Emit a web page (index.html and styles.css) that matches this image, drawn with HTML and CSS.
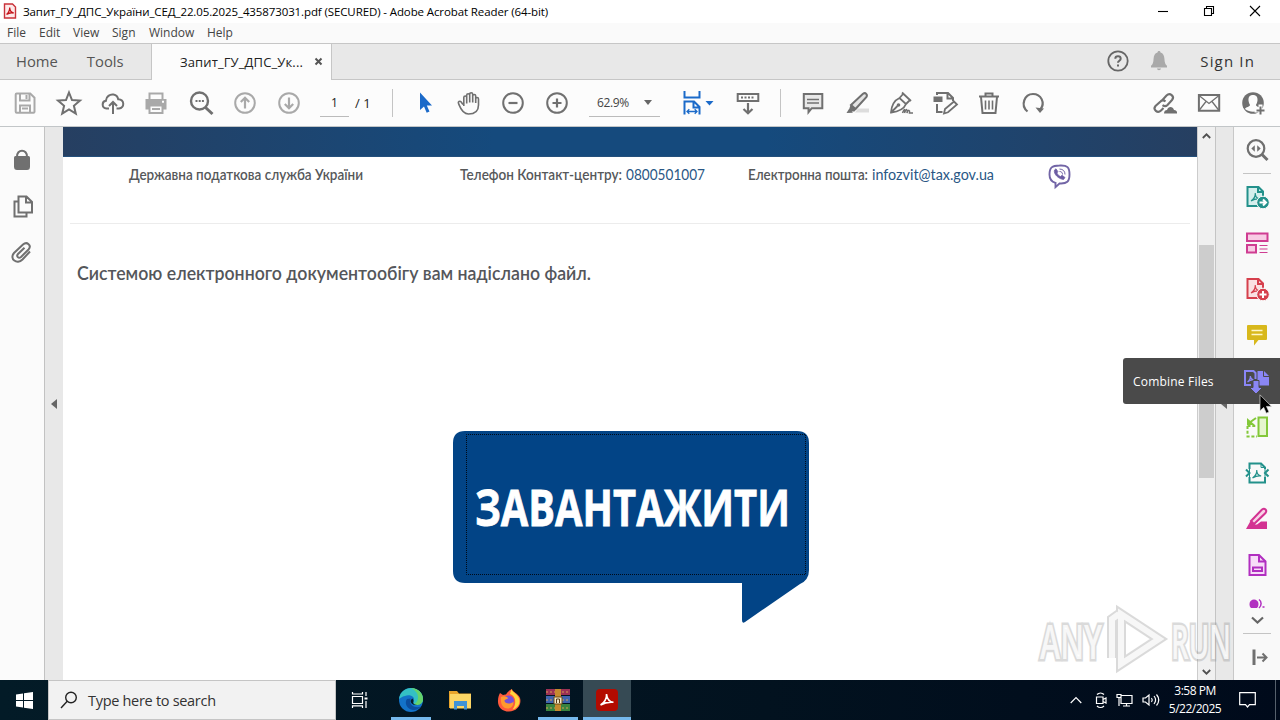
FILE: index.html
```
<!DOCTYPE html>
<html lang="uk">
<head>
    <meta charset="UTF-8">
    <meta name="viewport" content="width=device-width, initial-scale=1.0">
    <title>Запит_ГУ_ДПС_України_СЕД_22.05.2025_435873031.pdf</title>
    <link rel="stylesheet" href="styles.css">
</head>
<body>
    <div class="screen">
        <header class="titlebar">
            <svg class="app-icon" width="14" height="16" viewBox="0 0 14 16"><path d="M1.500 1h8L12.500 4v11h-11z" fill="#fdeaea" stroke="#c9323a" stroke-width="1.400"/><path d="M3.500 11.500c2-1.500 3.500-5 3.200-7 0 3 2 5 4 5.500-2-.5-5 0-7.200 1.500z" fill="none" stroke="#c4161c" stroke-width="1.300"/></svg>
            <span class="title-text">Запит_ГУ_ДПС_України_СЕД_22.05.2025_435873031.pdf (SECURED) - Adobe Acrobat Reader (64-bit)</span>
            <div class="window-buttons">
                <svg width="12" height="12" viewBox="0 0 12 12"><path d="M1 6.500h10"/></svg>
                <svg width="12" height="12" viewBox="0 0 12 12"><path d="M1.500 3.500h7v7h-7zM3.500 3V1.500h7v7H9"/></svg>
                <svg width="12" height="12" viewBox="0 0 12 12"><path d="M1 1l10 10M11 1L1 11"/></svg>
            </div>
        </header>

        <nav class="menubar">
            <span>File</span>
            <span>Edit</span>
            <span>View</span>
            <span>Sign</span>
            <span>Window</span>
            <span>Help</span>
        </nav>

        <div class="tabs">
            <div class="tab-static">
                <span>Home</span>
                <span>Tools</span>
            </div>
            <div class="tab-active">
                <span>Запит_ГУ_ДПС_Ук...</span>
                <svg width="9" height="9" viewBox="0 0 9 9"><path d="M1.500 1.500l6 6M7.500 1.500l-6 6" stroke="#555" stroke-width="2"/></svg>
            </div>
            <div class="tabs-right">
                <svg width="22" height="22" viewBox="0 0 22 22" fill="none" stroke="#666" stroke-width="1.800"><circle cx="11" cy="11" r="9.700"/><path d="M8.300 8.700c0-3.300 5.400-3.300 5.400 0 0 2-2.700 2-2.700 4" stroke-width="2"/><path d="M11 14.500v2" stroke-width="2"/></svg>
                <svg class="bell" width="18" height="20" viewBox="0 0 18 20" fill="#a9a9a9"><path d="M9 0c1 0 1.500.700 1.500 1.600 2.700.8 3.700 3 3.900 6 .2 4 .9 6 2.600 7.200V16.500H1v-1.700c1.700-1.200 2.400-3.200 2.600-7.200.2-3 1.200-5.200 3.900-6C7.500.7 8 0 9 0zM7 17.500h4c-.3 2.200-3.700 2.200-4 0z"/></svg>
                <span>Sign In</span>
            </div>
        </div>

        <div class="toolbar">
            <div class="tool-group">
                <svg class="tool pale" viewBox="0 0 30 30"><path d="M5.700 6.500q0-1 1-1h13.500l4.300 4.200v14q0 1-1 1H6.700q-1 0-1-1z"/><path d="M10 5.500v7h9.500v-7M16.500 7v4M10 24.500v-7h10v7M12 20.500h6"/></svg>
                <svg class="tool" viewBox="0 0 30 30"><path d="M15 4.500l3 7.500 8 .6-6.100 5.200 1.900 7.900-6.800-4.300-6.800 4.300 1.900-7.900L4 12.600l8-.6z"/></svg>
                <svg class="tool" viewBox="0 0 30 30"><path d="M11 20.500H8.500c-5-.5-5-7-.6-7.700C8 8.500 12 6 15.500 6.600c2.700.5 4.300 2.400 4.700 4.700 6.600.2 6.600 8.700.8 9.200h-2.500M15 26V14.500M11 18l4-4 4 4" stroke-width="2"/></svg>
                <svg class="tool pale" viewBox="0 0 30 30"><path d="M7.500 11V5.500h13V11"/><path d="M3.500 11h21v10.500h-21z" fill="#a9a9a9" stroke="none"/><path d="M7.500 17.500h13v7.500h-13z" fill="#fcfcfc"/><path d="M10 21h8"/><path d="M20 13.700h2" stroke="#fff"/></svg>
                <svg class="tool" viewBox="0 0 30 30"><circle cx="13.500" cy="13" r="8.500" stroke-width="2.400"/><path d="M19.500 19.500l7 6.500" stroke-width="3"/><path d="M9.500 13h2m1.200 0h2m1.200 0h2" stroke-width="2.200"/></svg>
                <svg class="tool pale" viewBox="0 0 30 30"><circle cx="15" cy="15" r="9.800"/><path d="M15 20.500V10M10.800 14l4.200-4.200 4.200 4.200" stroke-width="2.200"/></svg>
                <svg class="tool pale" viewBox="0 0 30 30"><circle cx="15" cy="15" r="9.800"/><path d="M15 9.500V20M10.800 16l4.200 4.200 4.200-4.200" stroke-width="2.200"/></svg>
            </div>
            <div class="page-box">1</div>
            <span class="page-total">/ 1</span>
            <div class="tool-sep"></div>
            <div class="tool-group">
                <svg class="tool" viewBox="0 0 30 30"><path d="M10 4.500v17.500l4-3.500 2.700 6.300 2.800-1.200-2.700-6h5.200z" fill="#1b6ac9" stroke="none"/></svg>
                <svg class="tool" viewBox="0 0 30 30"><path d="M9 16.500l-2-2.700c-1.200-1.200-3.300 0-2.500 1.600C6 19 8 26 14.500 26c6 0 10-2 10-9v-6c0-2-2.800-2-2.800 0v4-7c0-2-3-2-3 0v6.500V6.200c0-2-3-2-3 0v8.300V7.200c0-2-3-2-3 0v8.300V9.500c0-2-2.900-2-2.900 0V18" stroke-width="1.600"/></svg>
                <svg class="tool" viewBox="0 0 30 30"><circle cx="15" cy="15" r="9.800"/><path d="M10.500 15h9" stroke-width="2.200"/></svg>
                <svg class="tool" viewBox="0 0 30 30"><circle cx="15" cy="15" r="9.800"/><path d="M10.500 15h9M15 10.500v9" stroke-width="2.200"/></svg>
            </div>
            <div class="zoom-box"><span>62.9%</span><i class="caret"></i></div>
            <svg class="fit" viewBox="0 0 36 30" width="36" height="30"><path d="M3.500 3v6.500h15V3M3.500 26.500v-13H13l5.500 5.500v7.500M12.500 14v5.500h6" fill="none" stroke="#1b6ac9" stroke-width="2"/><path d="M6 23.500h10M8.300 21.300L6 23.500l2.300 2.200M13.700 21.300l2.300 2.200-2.300 2.200" fill="none" stroke="#1b6ac9" stroke-width="1.300"/><path d="M24.500 13h8l-4 4.500z" fill="#1b6ac9"/></svg>
            <svg class="tool tool-scroll" viewBox="0 0 30 30"><path d="M4.700 5.900h20.600v7H4.700z" stroke-width="2"/><path d="M8 9.400h14" stroke-dasharray="2 1.500"/><path d="M15 15v10M10.500 21l4.500 4.300 4.500-4.300" stroke-width="2.200"/></svg>
            <div class="tool-sep"></div>
            <div class="tool-group">
                <svg class="tool" viewBox="0 0 30 30"><path d="M5.800 6h18.500v14.200h-10.500l-3.300 4v-4H5.800z" fill="#e8e8e8"/><path d="M9 11.500h12M9 15h12" stroke-width="1.500"/></svg>
                <svg class="tool" viewBox="0 0 30 30"><path d="M13 24.500h14v-4H16z" fill="#ddd" stroke="none"/><path d="M9 17L21 5.800c2.500-1.800 5 .8 3.300 3.300L13.500 21z" fill="#e3e3e3"/><path d="M8.500 17l5.500 4-1.500 2.500-6-.2zM4.500 25l2.500-4 4 3.700z" fill="#707070" stroke="none"/></svg>
                <svg class="tool" viewBox="0 0 30 30"><path d="M5 24.500C5.500 17.500 8 12.500 13.500 10l6.500 6c-2 5-6.500 7.500-15 8.500zM13.500 10l4-4.500M20 16l4-4M16 4.500l9 8.500M5.500 24l6-6" stroke-width="1.800"/><circle cx="12.500" cy="17" r="1.800" fill="#707070" stroke="none"/><path d="M16.500 25c2-5 3-4 2 0 2-5 3-4 2.500 0 1.500-4 3-3 2.500 0h3.500" stroke-width="1.500"/></svg>
                <svg class="tool" viewBox="0 0 30 30"><path d="M3.500 8.500h9v5.500h-9z" fill="#707070" stroke="none"/><path d="M7 7V5h11l5 5v3M17.500 5v5.500H23M7 16v8h5.500" stroke-width="2"/><path d="M14 25.500l1-4.500 9-7.500 3 3-9 7.800z" stroke-width="1.800"/></svg>
                <svg class="tool" viewBox="0 0 30 30"><path d="M5 8.500h20M11.500 8V5.500h7V8M7 9l1.500 16h13L23 9" stroke-width="2"/><path d="M11.500 12.500v9M15 12.500v9M18.500 12.500v9" stroke-width="1.600"/></svg>
                <svg class="tool" viewBox="0 0 30 30"><path d="M9.500 23.500C2 17 6.500 6 15 6c8 0 12.500 8.500 7.500 15.500" stroke-width="2.200"/><path d="M17.500 19.500l8.500 1-4 4.500z" fill="#707070" stroke="none"/></svg>
            </div>
            <div class="tool-group group-share">
                <svg class="tool" viewBox="0 0 30 30"><path d="M12 12.500l4.500-5c3.500-3.500 8.500 1 5.500 4.500l-4.500 5c-1.500 1.500-3.500 1.300-5 .2M15.500 13.500c-1.600-1.500-3.700-1.500-5 0L5.500 18c-3 3.500 2 8 5.500 4.500l2.500-2.500" stroke-width="2.100"/><path d="M14 25.500c0-2.500 1.500-3.500 3-3.500 1-4 6-4 7 0 2 0 3.500 1.500 3 3.500z" fill="#707070" stroke="none"/></svg>
                <svg class="tool" viewBox="0 0 30 30"><path d="M4.900 7h20.300v15.800H4.900z"/><path d="M5 7.500l10 8 10-8M5 22.500l7-9M25 22.500l-7-9" stroke-width="1.300"/></svg>
                <svg class="tool" viewBox="0 0 30 30"><circle cx="15" cy="15" r="10.800" fill="#707070" stroke="none"/><path d="M15 7c-3.400 0-4.800 2.200-4.500 5.500.3 2.500 1 3.500 1.500 4.300.3 2.200-4.500 2.200-5 4.200 5 3.500 11 3.500 16 0-.5-2-5.300-2-5-4.200.5-1 1.200-2 1.500-4.300.3-3.300-1.100-5.500-4.500-5.500z" fill="#fcfcfc" stroke="none"/><path d="M20.500 16.500h4v4h5v4h-5v4h-4v-4h-4v-4h4z" fill="#fcfcfc" stroke="none"/><path d="M22.500 18.500v8M18.500 22.500h8" stroke-width="2"/></svg>
            </div>
        </div>

        <main class="workspace">
            <aside class="left-rail">
                <svg class="rail-icon" viewBox="0 0 30 30"><path d="M7 12.500q0-1.500 1.500-1.500h13q1.500 0 1.500 1.500v9q0 3.500-3 3.500H10q-3 0-3-3.500z" fill="#707070" stroke="none"/><path d="M10 12c-.5-8.500 10.500-8.500 10 0"/></svg>
                <svg class="rail-icon" viewBox="0 0 30 30"><path d="M11.500 5.500h8L25 11v10.500H11.500zM19 5.500v6h6M11 10.500H7.500v15h12v-3"/></svg>
                <svg class="rail-icon" viewBox="0 0 30 30"><path d="M23 14.500l-7.500 8C10 28 2 22 7 16l9-8.500c4-3.500 9 1 5.500 5L14 20c-2.500 2-5-.8-3-3l6.500-6.300"/></svg>
            </aside>
            <div class="gutter"><i class="tri-left"></i></div>

            <article class="page">
                <div class="banner"></div>
                <div class="contacts">
                    <svg width="1134" height="36" viewBox="0 0 1134 36">
                        <text class="c-label" x="66" y="23" textLength="234" lengthAdjust="spacingAndGlyphs">Державна податкова служба України</text>
                        <text class="c-label" x="397" y="23" textLength="162" lengthAdjust="spacingAndGlyphs">Телефон Контакт-центру:</text>
                        <text class="c-value" x="563" y="23" textLength="79" lengthAdjust="spacingAndGlyphs">0800501007</text>
                        <text class="c-label" x="685" y="23" textLength="120" lengthAdjust="spacingAndGlyphs">Електронна пошта:</text>
                        <text class="c-value" x="809" y="23" textLength="122" lengthAdjust="spacingAndGlyphs">infozvit@tax.gov.ua</text>
                        <g fill="none" stroke="#7265a6" stroke-width="1.900"><path d="M996.500 8.500c8-.5 10 2 10 9s-2.500 9.500-10 9l-4 3.600v-4.300c-4.500-1.200-6-3.400-6-8.300 0-7 2.500-9 10-9z"/><path d="M991.500 13c-1.200 4 4 9 9 9.500l1.500-2-3-2.200-1.500 1.200c-2-.8-3-2-3.600-3.500l1-1.300-1.900-2.900z" fill="#6b5ba3" stroke-width=".8"/><path d="M996.500 12c3.500.2 5.500 2 5.500 5.500M996.500 14.500c2 0 3 1 3 3" stroke-width="1"/></g>
                    </svg>
                </div>
                <div class="message">
                    <svg width="600" height="40" viewBox="0 0 600 40"><text class="msg-text" x="14" y="25" textLength="514" lengthAdjust="spacingAndGlyphs">Системою електронного документообігу вам надіслано файл.</text></svg>
                </div>
                <div class="download">
                    <svg width="356" height="192" viewBox="0 0 356 192">
                        <path d="M12 0h332q12 0 12 12v127q0 10-9 14L292 191q-3 2-3-2v-37H12q-12 0-12-12V12Q0 0 12 0z" fill="#024486"/>
                        <path d="M13.500 3.500h339v140h-339z" fill="none" stroke="#000a18" stroke-dasharray="1 1" stroke-dashoffset=".5"/>
                        <text class="dl-text" x="22" y="94.500" textLength="315" lengthAdjust="spacingAndGlyphs">ЗАВАНТАЖИТИ</text>
                    </svg>
                </div>
            </article>

            <div class="scrollbar">
                <svg width="9" height="6" viewBox="0 0 9 6"><path d="M.8 5L4.500 1.300 8.200 5"/></svg>
                <div class="thumb"></div>
                <svg width="9" height="6" viewBox="0 0 9 6"><path d="M.8 1L4.500 4.700 8.200 1"/></svg>
            </div>
            <div class="gutter gutter-right"><i class="tri-left"></i></div>

            <aside class="right-rail">
                <div class="rail-cell"><svg class="rail-icon" viewBox="0 0 30 30"><circle cx="14" cy="13.500" r="8.300" stroke-width="2.200"/><path d="M20 19.500l5.500 5.500" stroke-width="3"/><path d="M12.800 10.200v6.600l-3.500-3.300zM15.200 10.200v6.600l3.500-3.300z" fill="#707070" stroke="none"/></svg></div>
                <div class="rail-line"></div>
                <div class="rail-cell"><svg class="rail-icon export" viewBox="0 0 30 30"><path d="M5.500 5h11l4.500 4.500V24H5.500z" fill="#d5efed"/><path d="M16 5v5h5"/><path class="pdf" d="M9 19c3-2 4.500-5.500 4.200-8 0 3 2 5.500 4.500 6-3-.5-6 .4-8.700 2z"/><circle class="badge" cx="21" cy="20.500" r="6.300"/><path class="sign" d="M17.500 20.500h6M21 17.500l3 3-3 3"/></svg></div>
                <div class="rail-cell"><svg class="rail-icon organize" viewBox="0 0 30 30"><path d="M5 5.500h20.500v7.500H5zM5 17h9v7.500H5z" fill="#f8cbe4"/><path d="M17.500 17.500h8M17.500 21h8M17.500 24.500h8" stroke-width="1.200"/></svg></div>
                <div class="rail-cell"><svg class="rail-icon create" viewBox="0 0 30 30"><path d="M5.500 5h11l4.500 4.500V24H5.500z" fill="#fae0e1"/><path d="M16 5v5h5"/><path class="pdf" d="M9 19c3-2 4.500-5.500 4.200-8 0 3 2 5.500 4.500 6-3-.5-6 .4-8.700 2z"/><circle class="badge" cx="21" cy="20.500" r="6.300"/><path class="sign" d="M17.500 20.500h7M21 17v7"/></svg></div>
                <div class="rail-cell"><svg class="rail-icon" viewBox="0 0 30 30"><path d="M6 5h18q1 0 1 1v13q0 1-1 1h-7.500L12 25.500V20H6q-1 0-1-1V6q0-1 1-1z" fill="#d8b81c" stroke="none"/><path d="M9.500 10.500h11M9.500 14.500h11" stroke="#fff6c8" stroke-width="1.600"/></svg></div>
                <div class="rail-cell"></div>
                <div class="rail-cell"><svg class="rail-icon crop" viewBox="0 0 30 30"><path d="M16.500 5.500h8.500v18.500h-8.500z" fill="#e5f5ce"/><path d="M5.500 14v10.500H15M5.500 14H15" stroke-dasharray="3 1.800"/><path d="M14 6l-7 5"/><path d="M5 6v7h8z" fill="#83c83a" stroke="none"/></svg></div>
                <div class="rail-cell"><svg class="rail-icon export" viewBox="0 0 30 30"><path d="M7.500 11V5.500H19l4 4V11M7.500 19v5.500H23V19" /><path d="M7.500 11v8M23 11v8M19 5.500v4h4" stroke-width="1"/><path class="pdf" d="M10.500 20c3-2 4.500-5.500 4.200-8 0 3 2 5.500 4.500 6-3-.5-6 .4-8.700 2z"/><path d="M4 11.500L7.500 15 4 18.500M26.500 11.500L23 15l3.500 3.500"/></svg></div>
                <div class="rail-cell"><svg class="rail-icon redact" viewBox="0 0 30 30"><path d="M9 17L20 5.500q2-1.500 3.500 0t0 3.500L12 20z" fill="#f8d3e7"/><path d="M8.500 17l4.500 3.500h2L19 17.500h6V25H4z" fill="#d33392" stroke="none"/></svg></div>
                <div class="rail-cell"><svg class="rail-icon form" viewBox="0 0 30 30"><path d="M7.500 5H17l6.500 6.500V25h-16z" fill="#f7dcf8"/><path d="M17 5v6.500h6.500M11 17.500h9v3.500h-9z"/></svg></div>
                <div class="rail-cell cut"><svg width="20" height="14" viewBox="0 0 20 14"><path d="M2.500 9c0-6 9-6 9 0 0 2-.7 3.200-1.500 4H4c-1-.8-1.500-2-1.500-4z" fill="#b12fc0"/><path d="M12 4.500c2.800 2 2.800 6 0 8.500M15.500 12h2" fill="none" stroke="#b12fc0" stroke-width="1.500"/></svg></div>
                <div class="rail-more"><svg width="13" height="8" viewBox="0 0 13 8"><path d="M1 1.500l5.500 5 5.500-5" fill="none" stroke="#666" stroke-width="2.200"/></svg></div>
                <div class="rail-line"></div>
                <div class="rail-cell"><svg class="rail-icon" viewBox="0 0 30 30"><path d="M12 7.500v15.500" stroke-width="3"/><path d="M15 15.500h9M20.500 11.500l4 4-4 4"/></svg></div>
            </aside>

            <div class="tooltip">
                <span>Combine Files</span>
                <svg class="rail-icon combine" viewBox="0 0 30 30"><path d="M10 19H4V5h8.500l2 2v6" fill="none"/><path d="M16.500 5H23l5 5v9.500H16.500z" fill="#8a86f5" stroke="none"/><path d="M22.500 4.500v6H28" stroke="#4a4a4a" stroke-width="1"/><path d="M6.500 16c2-1.500 3-4 2.800-6 .2 2 1.500 3.500 3.200 4-2-.3-4 .4-6 2z" stroke-width="1.200"/><path d="M12 14.500h6v7h3.500L15 28l-6.500-6.500H12z" fill="#8a86f5" stroke="#4a4a4a" stroke-width="1"/></svg>
            </div>
            <svg class="cursor" width="14" height="20" viewBox="0 0 14 20"><path d="M1 .8v16l3.700-3.400 2.600 5.800 2.700-1.200-2.500-5.600h5z" fill="#000" stroke="#ddd" stroke-width=".7"/></svg>

            <svg class="watermark" width="200" height="66" viewBox="0 0 200 66">
                <g class="wm-shadow"><text x="5" y="51" textLength="62" lengthAdjust="spacingAndGlyphs">ANY</text><text x="136" y="51" textLength="60" lengthAdjust="spacingAndGlyphs">RUN</text><path d="M77 50V11l7-5M86 6v50l38-25z"/></g>
                <g class="wm-face"><text x="5" y="51" textLength="62" lengthAdjust="spacingAndGlyphs">ANY</text><text x="136" y="51" textLength="60" lengthAdjust="spacingAndGlyphs">RUN</text><path d="M77 50V11l7-5M86 6v50l38-25z"/></g>
            </svg>
        </main>

        <footer class="taskbar">
            <div class="start"><svg width="17" height="17" viewBox="0 0 17 17" fill="#fff"><path d="M0 2.400l7-1v6.600H0zM8 1.200L17 0v8H8zM0 9h7v6.600l-7-1zM8 9h9v8l-9-1.200z"/></svg></div>
            <div class="search">
                <svg width="18" height="18" viewBox="0 0 18 18" fill="none" stroke="#222" stroke-width="1.400"><circle cx="11" cy="6.500" r="5.300"/><path d="M7.200 10.300L1 17"/></svg>
                <span>Type here to search</span>
            </div>
            <div class="task"><svg width="18" height="18" viewBox="0 0 18 18" fill="none" stroke="#fff" stroke-width="1.200"><path d="M1.500 5.500h10v7h-10zM1.500 1v2h10V1M1.500 17v-2.200h10V17M15 1v4M15 10v7"/><path d="M13.500 7.500h3" stroke-width="2"/></svg></div>
            <div class="task running gap"><svg width="26" height="26" viewBox="0 0 26 26"><circle cx="13" cy="13" r="12" fill="#1372c9"/><path d="M1 12C2 5 7 1 13 1c7 0 12 5 12 11 0 4-3 6-6.500 6-3 0-4-1.500-3-3.300C18 10 12 7 7 9c-3 .7-5 2-6 3z" fill="#34c0c4"/><path d="M13 1c7 0 12 5 12 11 0 4-3 6-6.500 6-1 0-2-.3-2.700-.8C21 15 23 6 13 1z" fill="#65d36b"/><path d="M9 12c-3 4 0 10 6 11 3 .4 6-1 8-3.500-5 2-11-.5-11-5.500 0-1.500 1-2.500 1-2.500z" fill="#0b4d9e"/><path d="M14.500 11.500c-2 1-2.500 3-1 4.700 1.700 2 6 2.700 9.500.7-2 1.500-6.500 1.500-7.500-.3-.8-1.500 1-2.300-1-5.100z" fill="#071c28"/></svg></div>
            <div class="task"><svg width="22" height="20" viewBox="0 0 22 20"><path d="M0 1h8l2 2.500h12V18H0z" fill="#e9a52b"/><path d="M1 4h21v14.500H1z" fill="#fcd665"/><path d="M5 11h13v8.500h-3V16H8v3.500H5z" fill="#3f93d6"/></svg></div>
            <div class="task"><svg width="24" height="24" viewBox="0 0 24 24"><path d="M3 5l3 2c1-.5 2-.7 3-.5 1-2 3-4 6-5.500 0 3 6 4 8 9 2 7-3 13.500-11 13.500C5 23.500.5 18.500 1 12.500 1 9 2 7 3 5z" fill="#ff5a3c"/><path d="M14.500 1c.2 3 7 5 8 11 .5 6-4 9-7 9.500C20 16 19 8 13 6z" fill="#ffd43c"/><circle cx="11.500" cy="13" r="5.500" fill="#7451d8"/><path d="M4 9c3-1.500 5.500-.5 7 1 0 1.500-3.500 1-3.500 3 .3 3 6.500 3.500 9 .5 0 5-3 7-6 7-4 0-7.500-4-6.500-11.500z" fill="#ff9a2e"/></svg></div>
            <div class="task running"><svg width="24" height="24" viewBox="0 0 24 24"><path d="M0 1h24v6H0z" fill="#9b3154"/><path d="M0 8h24v7H0z" fill="#3f64ae"/><path d="M0 16h24v7H0z" fill="#39833f"/><path d="M0 4h24M0 12h24M0 20h24" stroke="#d7a050" stroke-width="1" stroke-dasharray="2 2"/><path d="M9 1h6v22H9z" fill="#c58a2f"/><path d="M8 9h8v7H8z" fill="#f2e7c8" stroke="#6d4a13"/><path d="M10.500 15v-4h3v4" fill="none" stroke="#5a3a10"/></svg></div>
            <div class="task running active"><svg width="22" height="22" viewBox="0 0 22 22"><rect width="22" height="22" rx="4" fill="#b30b00"/><path d="M4.500 16c4-2 6.500-7 6-11 .5 4.500 3 8 7 8.300-4.500-.5-9 .5-13 2.700z" fill="none" stroke="#fff" stroke-width="1.600"/></svg></div>
            <div class="tray">
                <svg width="12" height="8" viewBox="0 0 12 8"><path d="M.7 7L6 1.700 11.300 7"/></svg>
                <svg width="14" height="16" viewBox="0 0 14 16"><path d="M2.500 5h6.500v6.500H2.500zM9 7.500l3-1.500v5L9 9.500M3 2.500c2-2 5-2 7 0M3 14c2 2 5 2 7 0"/></svg>
                <svg width="17" height="14" viewBox="0 0 17 14"><path d="M5 2.500h11v8H5zM7 13h7M10.500 10.500V13M1 1.500h4v3H1zM3 4.500V13"/></svg>
                <svg width="18" height="14" viewBox="0 0 18 14"><path d="M1 5v4h2.500L7 12V2L3.500 5zM9.500 5c1 1.300 1 2.700 0 4M12 3c2 2.500 2 5.500 0 8M14.500 1.500c2.700 3.300 2.700 7.700 0 11"/></svg>
            </div>
            <div class="clock"><span>3:58 PM</span><span>5/22/2025</span></div>
            <div class="notify"><svg width="17" height="16" viewBox="0 0 17 16"><path d="M.7.7h15.600v12H10.500L8.500 15l-2-2.300H.7z"/></svg></div>
            <div class="peek"></div>
        </footer>
    </div>
</body>
</html>
```
FILE: styles.css
```
* {
    box-sizing: border-box;
}
body {
    margin: 0;
    font-family: "Open Sans", "Noto Sans", sans-serif;
    font-size: 12px;
    color: #444;
    overflow: hidden;
}
svg {
    display: block;
    flex: none;
    overflow: visible;
}
span {
    white-space: nowrap;
}
.screen {
    width: 1280px;
    height: 720px;
    display: grid;
    grid-template-rows: 23px 20px 37px 47px 553px 40px;
    background: #fff;
}

/* title bar and menu */
.titlebar {
    display: flex;
    align-items: center;
    padding: 0 19px 1px 3px;
    color: #000;
    background: #fff;
}
.title-text {
    margin-left: 6px;
    font-size: 11.5px;
    letter-spacing: -0.11px;
}
.window-buttons {
    display: flex;
    gap: 34px;
    margin-left: auto;
}
.window-buttons svg {
    fill: none;
    stroke: #000;
    stroke-width: 1.1;
}
.menubar {
    display: grid;
    grid-template-columns: 32px 34px 39px 37px 58px 40px;
    align-items: center;
    padding: 0 0 2px 7px;
    background: #fafafa;
}

/* tabs */
.tabs {
    display: flex;
    background: #e8e8e8;
    border-top: 1px solid #c6c6c6;
    border-bottom: 1px solid #c6c6c6;
    font-size: 15px;
}
.tab-static {
    display: flex;
    align-items: center;
    width: 151px;
    padding: 0 0 2px 16px;
    gap: 29px;
    color: #555;
    font-size: 14.8px;
}
.tab-active {
    display: flex;
    align-items: center;
    gap: 11px;
    width: 181px;
    padding: 0 0 1px 28px;
    margin-bottom: -1px;
    background: #fcfcfc;
    border-left: 1px solid #c6c6c6;
    border-right: 1px solid #c6c6c6;
    color: #222;
    font-size: 13px;
    letter-spacing: 0.13px;
}
.tabs-right {
    display: flex;
    align-items: center;
    margin-left: auto;
    padding: 0 25px 2px 0;
    color: #333;
    letter-spacing: 1.15px;
}
.bell {
    margin: 0 32px 0 21px;
}

/* toolbar */
.toolbar {
    display: flex;
    align-items: center;
    padding-left: 3px;
    background: #fcfcfc;
    border-bottom: 1px solid #c2c6c8;
}
.tool-group {
    display: flex;
}
.tool {
    width: 30px;
    height: 30px;
    margin: 0 7px;
    fill: none;
    stroke: #707070;
    stroke-width: 2;
}
.pale {
    stroke: #a9a9a9;
}
.page-box {
    width: 29px;
    height: 27px;
    margin-left: 9px;
    border-bottom: 1px solid #bbb;
    text-align: center;
    line-height: 26px;
    color: #222;
}
.page-total {
    width: 43px;
    padding-left: 6px;
    color: #222;
    font-size: 13px;
}
.tool-sep {
    width: 1px;
    height: 28px;
    background: #c4c4c4;
}
.toolbar .tool-sep + .tool-group {
    margin-left: 10px;
}
.zoom-box {
    display: flex;
    align-items: center;
    justify-content: space-between;
    width: 71px;
    height: 27px;
    margin-left: 10px;
    padding: 0 8px;
    border-bottom: 1px solid #bbb;
    font-size: 12px;
    letter-spacing: -0.4px;
}
.caret {
    border: 4px solid transparent;
    border-top: 5px solid #666;
    border-bottom: 0;
}
.fit {
    margin-left: 21px;
}
.tool-scroll {
    margin: 0 17px 0 16px;
}
.toolbar .group-share {
    margin-left: auto;
    margin-right: 5px;
}

/* document area */
.workspace {
    position: relative;
    display: grid;
    grid-template-columns: 45px 18px 1134px 18px 19px 46px;
    height: 553px;
    overflow: hidden;
}
.left-rail {
    padding: 18px 0 0 7px;
    background: #fbfbfb;
    border-right: 1px solid #c2c2c2;
}
.left-rail svg {
    margin-bottom: 16px;
}
.rail-icon {
    width: 30px;
    height: 30px;
    fill: none;
    stroke: #707070;
    stroke-width: 2;
}
.gutter {
    background: #e8e8e8;
}
.tri-left {
    display: block;
    width: 0;
    margin: 272px 0 0 6px;
    border: 5px solid transparent;
    border-right: 6px solid #666;
    border-left: 0;
}
.gutter-right {
    border-left: 1px solid #c4c4c4;
    border-right: 1px solid #c8c8c8;
}
.gutter-right .tri-left {
    margin-left: 5px;
}
.page {
    background: #fff;
}
.banner {
    height: 30px;
    background: linear-gradient(90deg, #263f61, #154a7d 38%, #154a7d 62%, #263f61);
    border-bottom: 1px solid #24507c;
}
.contacts {
    height: 67px;
    margin: 0 7px;
    border-bottom: 1px solid #ececec;
}
.contacts svg {
    margin-left: -7px;
}
.c-label, .c-value {
    font-family: Lato, "Open Sans", sans-serif;
    font-size: 14.5px;
    font-weight: 600;
    fill: #56585a;
}
.c-value {
    font-weight: 400;
    fill: #2a5785;
}
.message {
    padding-top: 31px;
}
.msg-text {
    font-family: Lato, "Open Sans", sans-serif;
    font-size: 19px;
    font-weight: 600;
    fill: #54565a;
}
.download {
    padding: 136px 0 0 390px;
}
.dl-text {
    font-family: "Open Sans", "Noto Sans", sans-serif;
    font-size: 50px;
    font-weight: 700;
    fill: #fff;
    stroke: #fff;
    stroke-width: 0.8;
}
.scrollbar {
    display: flex;
    flex-direction: column;
    align-items: center;
    padding: 6px 0 5px;
    background: #f0f0f0;
    border-left: 1px solid #ccc;
}
.scrollbar svg {
    fill: none;
    stroke: #505050;
    stroke-width: 1.8;
}
.thumb {
    width: 15px;
    height: 233px;
    margin: 106px 0 auto;
    background: #cdcdcd;
}
.right-rail {
    background: #f9f9f9;
}
.rail-cell {
    display: flex;
    align-items: center;
    justify-content: center;
    height: 46px;
}
.rail-line {
    height: 1px;
    margin: 0 9px;
    background: #c4c4c4;
}
.cut {
    align-items: flex-end;
    height: 21px;
    overflow: hidden;
}
.rail-more {
    display: flex;
    align-items: center;
    justify-content: center;
    height: 24px;
    padding-bottom: 2px;
}
.pdf {
    fill: none;
    stroke-width: 1.2;
}
.badge {
    stroke: #f9f9f9;
    stroke-width: 1;
}
.sign {
    stroke: #fff;
}
.export {
    stroke: #23918b;
}
.export .badge {
    fill: #23918b;
}
.organize {
    stroke: #cf3d92;
}
.create {
    stroke: #d6404d;
}
.create .badge {
    fill: #d6404d;
}
.crop {
    stroke: #83c83a;
}
.redact {
    stroke: #d33392;
}
.form {
    stroke: #b12fc0;
}
.combine {
    stroke: #8a86f5;
}
.tooltip {
    position: absolute;
    top: 231px;
    right: 0;
    display: flex;
    align-items: center;
    justify-content: space-between;
    width: 157px;
    height: 46px;
    padding: 0 9px 0 10px;
    border-radius: 3px 0 0 3px;
    background: #4a4a4a;
    color: #fff;
    letter-spacing: 0.2px;
}
.cursor {
    position: absolute;
    left: 1259px;
    top: 267px;
}
.watermark {
    position: absolute;
    left: 1035px;
    top: 481px;
    font-family: "Open Sans", sans-serif;
    font-size: 47px;
    font-weight: 600;
}
.wm-shadow {
    fill: none;
    stroke: #888;
    stroke-width: 5;
    opacity: 0.3;
}
.wm-shadow path {
    stroke-width: 10;
}
.wm-face {
    fill: #fff;
    opacity: 0.8;
}
.wm-face path {
    fill: none;
    stroke: #fff;
    stroke-width: 6;
}

/* taskbar */
.taskbar {
    display: flex;
    background: linear-gradient(90deg, #031b27, #02121f 60%, #000a1b);
    color: #fff;
}
.start, .task {
    display: flex;
    align-items: center;
    justify-content: center;
    width: 48px;
}
.search {
    display: flex;
    align-items: center;
    gap: 10px;
    width: 288px;
    padding-left: 11px;
    background: #f2f2f2;
    border: 1px solid #c5c5c5;
    color: #333;
    font-size: 14.5px;
    letter-spacing: -0.3px;
}
.task {
    margin-right: 1px;
}
.gap {
    margin-left: 2px;
}
.running {
    background: linear-gradient(#76b9ed, #76b9ed) center bottom / 40px 3px no-repeat;
}
.active {
    background: linear-gradient(#76b9ed, #76b9ed) center bottom / 48px 3px no-repeat #364a54;
}
.tray {
    display: flex;
    align-items: center;
    gap: 9px;
    margin-left: auto;
}
.tray svg, .notify svg {
    fill: none;
    stroke: #fff;
    stroke-width: 1.2;
}
.tray svg:nth-child(2) {
    margin: 0 -1px 0 3px;
}
.clock {
    display: flex;
    flex-direction: column;
    align-items: center;
    width: 70px;
    padding-top: 2px;
    line-height: 18px;
}
.clock span {
    letter-spacing: -0.5px;
}
.notify {
    display: flex;
    align-items: center;
    padding: 0 19px 0 9px;
}
.peek {
    width: 5px;
    border-left: 1px solid #56606c;
}
```
